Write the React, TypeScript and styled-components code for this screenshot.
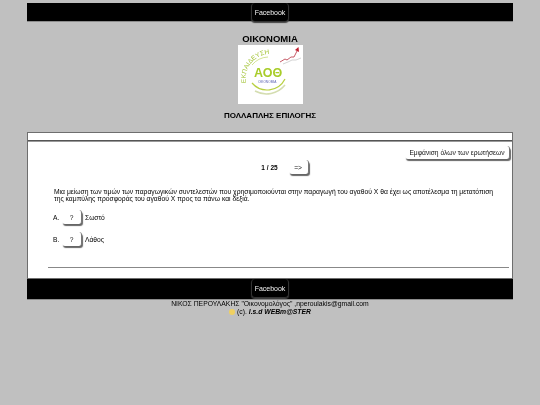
import React from 'react'
import styled, { createGlobalStyle } from 'styled-components'

const GlobalStyle = createGlobalStyle`
	html, body {
		margin: 0;
		padding: 0;
		background: #c0c0c0;
		font-family: 'Liberation Sans', Arial, sans-serif;
		color: #000;
	}
`

const Page = styled.div`
	width: 486px;
	margin: 0 auto;
	padding-top: 3px;
	display: flex;
	flex-direction: column;
	align-items: center;
	will-change: transform;
`

const BlackBar = styled.div<{ $height: number }>`
	width: 100%;
	height: ${(p) => p.$height}px;
	background: #000;
	box-shadow: 0 1px 0 #8c8c8c;
	display: flex;
	justify-content: center;
	align-items: flex-start;
`

const FacebookLink = styled.a`
	height: 18px;
	padding: 0 3px;
	display: flex;
	align-items: center;
	color: #f4f4f4;
	font-size: 7px;
	border: 1px solid #333;
	border-top: 0;
	border-radius: 4px;
	box-shadow: 0 1px 1px #444;
`

const Title = styled.h1`
	margin: 12px 0 1px;
	font-size: 9.5px;
	line-height: 11px;
	font-weight: bold;
`

const Logo = styled.svg`
	display: block;
	width: 65px;
	height: 59px;
`

const SubTitle = styled.h2`
	margin: 7px 0 0;
	font-size: 8px;
	line-height: 10px;
	font-weight: bold;
`

const Panel = styled.section`
	width: 100%;
	box-sizing: border-box;
	height: 147px;
	margin-top: 11px;
	background: #fff;
	border: 1px solid #6e6e6e;
	display: flex;
	flex-direction: column;
`

const PanelHead = styled.div`
	height: 7px;
	border-bottom: 1px solid #555;
	box-shadow: 0 1px 0 #999;
`

const TopRow = styled.div`
	display: flex;
	justify-content: flex-end;
	padding: 5px 2px 0 0;
`

const ShadowButton = styled.button<{ $width: number; $height: number }>`
	width: ${(p) => p.$width}px;
	height: ${(p) => p.$height}px;
	padding: 0;
	background: #fff;
	border: 0;
	border-right: 1px solid #777;
	border-radius: 3px;
	box-shadow: 1px 2px 1px #666;
	font-family: inherit;
	font-size: 6.7px;
	color: #111;
	flex-shrink: 0;
`

const Pager = styled.div`
	display: flex;
	align-items: center;
	justify-content: center;
	gap: 11px;
	margin-top: 1px;
	padding-left: 30px;
`

const PagerText = styled.span`
	font-size: 6.5px;
	font-weight: bold;
`

const Question = styled.p`
	margin: 14px 0 0;
	padding: 0 14px 0 26px;
	font-size: 6.76px;
	line-height: 7px;
`

const Answers = styled.div`
	display: flex;
	flex-direction: column;
	gap: 8px;
	margin-top: 8px;
	padding-left: 25px;
`

const Answer = styled.div`
	display: flex;
	align-items: center;
	font-size: 6.7px;
`

const AnswerLetter = styled.span`
	width: 9px;
`

const AnswerText = styled.span`
	margin-left: 3px;
`

const Rule = styled.hr`
	width: 461px;
	margin: auto 0 10px 20px;
	border: 0;
	border-top: 1px solid #888;
`

const Credits = styled.footer`
	font-size: 6.8px;
	line-height: 8px;
	text-align: center;
	margin-top: 1px;
`

const Star = styled.span`
	display: inline-block;
	width: 6px;
	height: 6px;
	margin-right: 2px;
	border-radius: 50%;
	background: #f0d060;
	vertical-align: -1px;
`

const Signature = styled.b`
	font-style: italic;
`

const App = () => (
	<>
		<GlobalStyle />
		<Page>
			<BlackBar $height={18}>
				<FacebookLink>Facebook</FacebookLink>
			</BlackBar>
			<Title>ΟΙΚΟΝΟΜΙΑ</Title>
			<Logo viewBox="0 0 65 59">
				<rect width="65" height="59" fill="#fff" />
				<path id="arcText" d="M8 38 A25 25 0 0 1 40 10" fill="none" />
				<text fontSize="6.5" fill="#a4c438" fontFamily="Liberation Sans" textLength="42" lengthAdjust="spacingAndGlyphs">
					<textPath href="#arcText">ΕΚΠΑΙΔΕΥΣΗ</textPath>
				</text>
				<path d="M14 20 A22 22 0 0 1 30 12" fill="none" stroke="#c8dc78" strokeWidth="0.8" />
				<path d="M14 38 A20 20 0 0 0 47 34" fill="none" stroke="#b8d040" strokeWidth="1.2" />
				<path d="M17 46 A24 24 0 0 0 47 40" fill="none" stroke="#d4ddb0" strokeWidth="1.5" />
				<text x="16" y="32" fontSize="12.5" fill="#a8cc28" fontFamily="Liberation Sans" fontWeight="bold">
					ΑΟΘ
				</text>
				<text x="20" y="38" fontSize="3.2" fill="#5a60b0" fontFamily="Liberation Sans">
					ΟΙΚΟΝΟΜΙΑ
				</text>
				<path d="M42 17 L47 14 L49 15 L53 12 L56 12 L59 6" fill="none" stroke="#b83040" strokeWidth="0.8" />
				<path d="M57 5 L60.5 2 L61 7 Z" fill="#c02030" />
				<path d="M45 19 L50 17 L54 15 L58 15 L63 13" fill="none" stroke="#c8c8c8" strokeWidth="0.8" />
			</Logo>
			<SubTitle>ΠΟΛΛΑΠΛΗΣ ΕΠΙΛΟΓΗΣ</SubTitle>
			<Panel>
				<PanelHead />
				<TopRow>
					<ShadowButton $width={105} $height={13}>
						Εμφάνιση όλων των ερωτήσεων
					</ShadowButton>
				</TopRow>
				<Pager>
					<PagerText>1 / 25</PagerText>
					<ShadowButton $width={20} $height={14}>
						=&gt;
					</ShadowButton>
				</Pager>
				<Question>
					Μια μείωση των τιμών των παραγωγικών συντελεστών που χρησιμοποιούνται στην παραγωγή του αγαθού Χ θα έχει ως
					αποτέλεσμα τη μετατόπιση της καμπύλης προσφοράς του αγαθού Χ προς τα πάνω και δεξιά.
				</Question>
				<Answers>
					<Answer>
						<AnswerLetter>Α.</AnswerLetter>
						<ShadowButton $width={20} $height={14}>
							?
						</ShadowButton>
						<AnswerText>Σωστό</AnswerText>
					</Answer>
					<Answer>
						<AnswerLetter>Β.</AnswerLetter>
						<ShadowButton $width={20} $height={14}>
							?
						</ShadowButton>
						<AnswerText>Λάθος</AnswerText>
					</Answer>
				</Answers>
				<Rule />
			</Panel>
			<BlackBar $height={20}>
				<FacebookLink>Facebook</FacebookLink>
			</BlackBar>
			<Credits>
				ΝΙΚΟΣ ΠΕΡΟΥΛΑΚΗΣ "Οικονομολόγος" ,nperoulakis@gmail.com
				<br />
				<Star />
				(c). <Signature>I.s.d WEBm@STER</Signature>
			</Credits>
		</Page>
	</>
)

export default App
